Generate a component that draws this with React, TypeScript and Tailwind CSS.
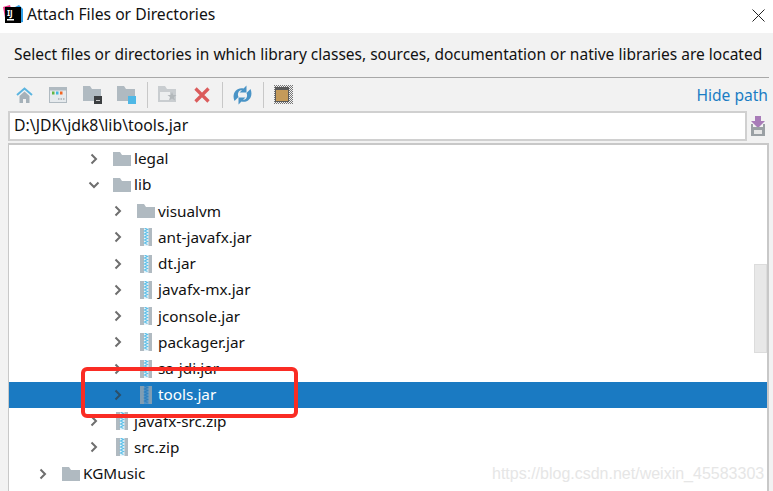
const font = "font-['Noto_Sans','Liberation_Sans',sans-serif]";

type Row = { name: string; depth: 0 | 1 | 2; kind: 'folder' | 'jar'; open?: boolean; selected?: boolean };

const rows: Row[] = [
  { name: 'legal', depth: 1, kind: 'folder' },
  { name: 'lib', depth: 1, kind: 'folder', open: true },
  { name: 'visualvm', depth: 2, kind: 'folder' },
  { name: 'ant-javafx.jar', depth: 2, kind: 'jar' },
  { name: 'dt.jar', depth: 2, kind: 'jar' },
  { name: 'javafx-mx.jar', depth: 2, kind: 'jar' },
  { name: 'jconsole.jar', depth: 2, kind: 'jar' },
  { name: 'packager.jar', depth: 2, kind: 'jar' },
  { name: 'sa-jdi.jar', depth: 2, kind: 'jar' },
  { name: 'tools.jar', depth: 2, kind: 'jar', selected: true },
  { name: 'javafx-src.zip', depth: 1, kind: 'jar' },
  { name: 'src.zip', depth: 1, kind: 'jar' },
  { name: 'KGMusic', depth: 0, kind: 'folder' },
];

const FolderIcon = () => (
  <svg width="18" height="14" viewBox="0 0 18 14" className="shrink-0">
    <path d="M0 0h7l2 3h9v11H0z" fill="#b0bac1" />
  </svg>
);

const JarIcon = ({ selected }: { selected?: boolean }) => (
  <svg width="12" height="18" viewBox="0 0 12 18" className="shrink-0">
    <rect width="12" height="18" fill={selected ? '#7f9db3' : '#b0bac1'} />
    <rect x="4" width="4.5" height="18" fill={selected ? '#4d93c9' : '#e8f4fa'} />
    <path d="M4.500 0l3 1.500-3 1.500 3 1.500-3 1.500 3 1.500-3 1.500 3 1.500-3 1.500 3 1.500-3 1.500 3 1.500" stroke={selected ? '#2f7fbd' : '#5fc0e8'} strokeWidth="1.2" fill="none" />
  </svg>
);

const Chevron = ({ open, selected }: { open?: boolean; selected?: boolean }) => (
  <svg width="12" height="12" viewBox="0 0 12 12" className="shrink-0">
    <path
      d={open ? 'M1.500 3.500L6 8l4.500-4.500' : 'M3.500 1.500L8 6l-4.500 4.500'}
      stroke={selected ? '#2c4f68' : '#6e6e6e'}
      strokeWidth="2"
      fill="none"
    />
  </svg>
);

const TreeRow = ({ row }: { row: Row }) => {
  const pad = row.depth === 0 ? 'pl-[28px]' : row.depth === 1 ? 'pl-[79px]' : 'pl-[103px]';
  const iconGap = row.kind === 'folder' ? 'ml-[13px]' : 'ml-[16px]';
  return (
    <div className={`flex h-[26.25px] items-center ${pad} ${row.selected ? 'bg-[#1a7ac2] text-white' : 'text-[#111]'}`}>
      <Chevron open={row.open} selected={row.selected} />
      <div className={`flex shrink-0 items-center ${iconGap}`}>
        {row.kind === 'folder' ? <FolderIcon /> : <JarIcon selected={row.selected} />}
      </div>
      <span className={`text-[15.3px] ${row.kind === 'folder' ? 'ml-[3px]' : 'ml-[6px]'}`}>{row.name}</span>
    </div>
  );
};

const Divider = () => <div className="h-[26px] w-[1px] shrink-0 bg-[#c8c8c8]" />;

const Toolbar = () => (
  <div className="flex h-[33px] items-center justify-between">
    <div className="flex items-center pl-[8px]">
      {/* home */}
      <svg width="17" height="16" viewBox="0 0 17 16" className="mr-[16px]">
        <path d="M1 8l7.500-6.500L16 8" stroke="#5cb5e0" strokeWidth="2" fill="none" />
        <path d="M3.500 9l5-4.500 5 4.500v7h-3.500v-4H7v4H3.500z" fill="#a5b1b9" />
      </svg>
      {/* window */}
      <svg width="18" height="16" viewBox="0 0 18 16" className="mr-[16px]">
        <rect width="18" height="16" fill="#b0bac1" />
        <rect x="1" y="3.500" width="16" height="11.500" fill="#e6eaed" />
        <rect x="3" y="4.500" width="2.500" height="3" fill="#62b543" />
        <rect x="7" y="4.500" width="2.500" height="3" fill="#40b6e0" />
        <rect x="11" y="4.500" width="2.500" height="3" fill="#f26522" />
        <path d="M9 12h1.500M11.500 12H13M14 12h1.500" stroke="#8a8f93" />
      </svg>
      {/* folder with terminal */}
      <svg width="20" height="20" viewBox="0 0 20 20" className="mr-[14px]">
        <path d="M0 1h7l2 3h9v12H0z" fill="#b0bac1" />
        <rect x="11" y="11" width="8" height="8" fill="#3c3f41" />
        <rect x="13" y="15" width="4" height="1" fill="#ccc" />
      </svg>
      {/* folder with blue square */}
      <svg width="20" height="20" viewBox="0 0 20 20" className="mr-[10px]">
        <path d="M0 1h7l2 3h9v12H0z" fill="#b0bac1" />
        <rect x="11" y="11" width="8" height="8" fill="#4fb8e6" />
      </svg>
      <Divider />
      {/* new folder, disabled */}
      <svg width="20" height="19" viewBox="0 0 20 19" className="mr-[16px] ml-[10px]">
        <path d="M0 1h7l2 3h9v13H0z" fill="#c9cdd0" />
        <rect x="2" y="7" width="10" height="8" fill="#eceeef" />
        <path d="M14 7l1.200 3h3.300l-2.500 2 1 3.500-3-2-3 2 1-3.500-2.500-2h3.300z" fill="#b3b8bb" />
      </svg>
      {/* delete */}
      <svg width="16" height="16" viewBox="0 0 16 16" className="mr-[12px]">
        <path d="M1.500 1.500l13 13M14.500 1.500l-13 13" stroke="#db5c5c" strokeWidth="3.200" />
      </svg>
      <Divider />
      {/* refresh */}
      <svg width="19" height="20" viewBox="0 0 19 20" className="mr-[11px] ml-[10px]">
        <path d="M1.500 16C-1.500 9 3 2 10.500 3.500L13.500 0.500v7h-7l2.500-2.200C5.500 5 4 9 5.500 12z" fill="#4a94c6" />
        <path d="M17.500 4c3 7-1.500 14-9 12.500l-3 3v-7h7L10 14.700c3.500.300 5-3.700 3.500-6.700z" fill="#4a94c6" />
      </svg>
      <Divider />
      {/* show hidden */}
      <svg width="19" height="19" viewBox="0 0 19 19" className="ml-[10px]">
        <defs>
          <pattern id="checker" width="2" height="2" patternUnits="userSpaceOnUse">
            <rect width="1" height="1" fill="#777" />
            <rect x="1" y="1" width="1" height="1" fill="#777" />
          </pattern>
        </defs>
        <rect width="19" height="19" fill="url(#checker)" />
        <rect x="1" y="2" width="14" height="15" fill="#5a5a5a" />
        <rect x="2" y="5" width="12" height="11" fill="#c49a5a" />
      </svg>
    </div>
    <span className="pt-[2px] pr-[1px] text-[15.6px] text-[#1a7dc4]">Hide path</span>
  </div>
);

export default function App() {
  return (
    <div className={`relative h-[491px] w-[773px] overflow-hidden bg-[#f2f2f2] ${font} text-[#111]`}>
      {/* title bar */}
      <div className="flex h-[33px] items-center bg-white pr-[8px] pb-[3px] pl-[3px]">
        <svg width="20" height="20" viewBox="0 0 20 20" className="mr-[4px] shrink-0">
          <path d="M0 2l7-2 3 10-7 8z" fill="#f0388a" />
          <path d="M20 4l-4-4-6 3 6 15 4-1z" fill="#2f9fe8" />
          <rect x="2" y="2" width="16" height="16" fill="#000" />
          <text x="4" y="10.500" fontSize="8" fontWeight="700" fill="#fff">IJ</text>
          <rect x="4" y="14" width="7" height="1.500" fill="#fff" />
        </svg>
        <span className="flex-1 text-[15.7px]">Attach Files or Directories</span>
        <svg width="13" height="13" viewBox="0 0 13 13">
          <path d="M.5.500l12 12M12.500.500l-12 12" stroke="#222" strokeWidth="1" />
        </svg>
      </div>

      <div className="flex h-[458px] flex-col pr-[4px] pl-[8px]">
        <div className="h-[45px] border-b border-b-[#a8a8a8] pt-[8px] pl-[6px] text-[15.5px] leading-[26px] whitespace-nowrap">
          Select files or directories in which library classes, sources, documentation or native libraries are located
        </div>
        <Toolbar />
        <div className="flex h-[30px] items-center">
          <div className="flex h-[30px] w-[739px] items-center border-2 border-[#d0d0d0] bg-white pl-[4px] text-[15.8px]">
            D:\JDK\jdk8\lib\tools.jar
          </div>
          <svg width="16" height="20" viewBox="0 0 16 20" className="ml-[3px]">
            <path d="M5 0h6v5h4l-7 7-7-7h4z" fill="#a87cb8" />
            <path d="M1 8v12h14V8h-2v3H3V8z" fill="#9aa0a4" />
            <rect x="4" y="14" width="8" height="4" fill="#e6e6e6" />
          </svg>
        </div>
        <div className="mt-[2px] flex-1 border-t-2 border-r-2 border-l border-[#c8c8c8] bg-white pt-[0.5px]">
          {rows.map((row) => (
            <TreeRow key={row.name} row={row} />
          ))}
        </div>
      </div>

      {/* scrollbar thumb */}
      <div className="absolute top-[264px] left-[754px] h-[89px] w-[13px] border border-[#dcdcdc] bg-[#e8e8e8]" />

      {/* red annotation */}
      <div className="absolute top-[367px] left-[81px] h-[51px] w-[217px] rounded-[6px] border-4 border-[#fa2c24]" />

      {/* watermark */}
      <span className="absolute top-[462px] left-[492px] font-['Liberation_Sans',sans-serif] text-[16px] text-[#e6e6e6]">
        https://blog.csdn.net/weixin_45583303
      </span>
    </div>
  );
}
